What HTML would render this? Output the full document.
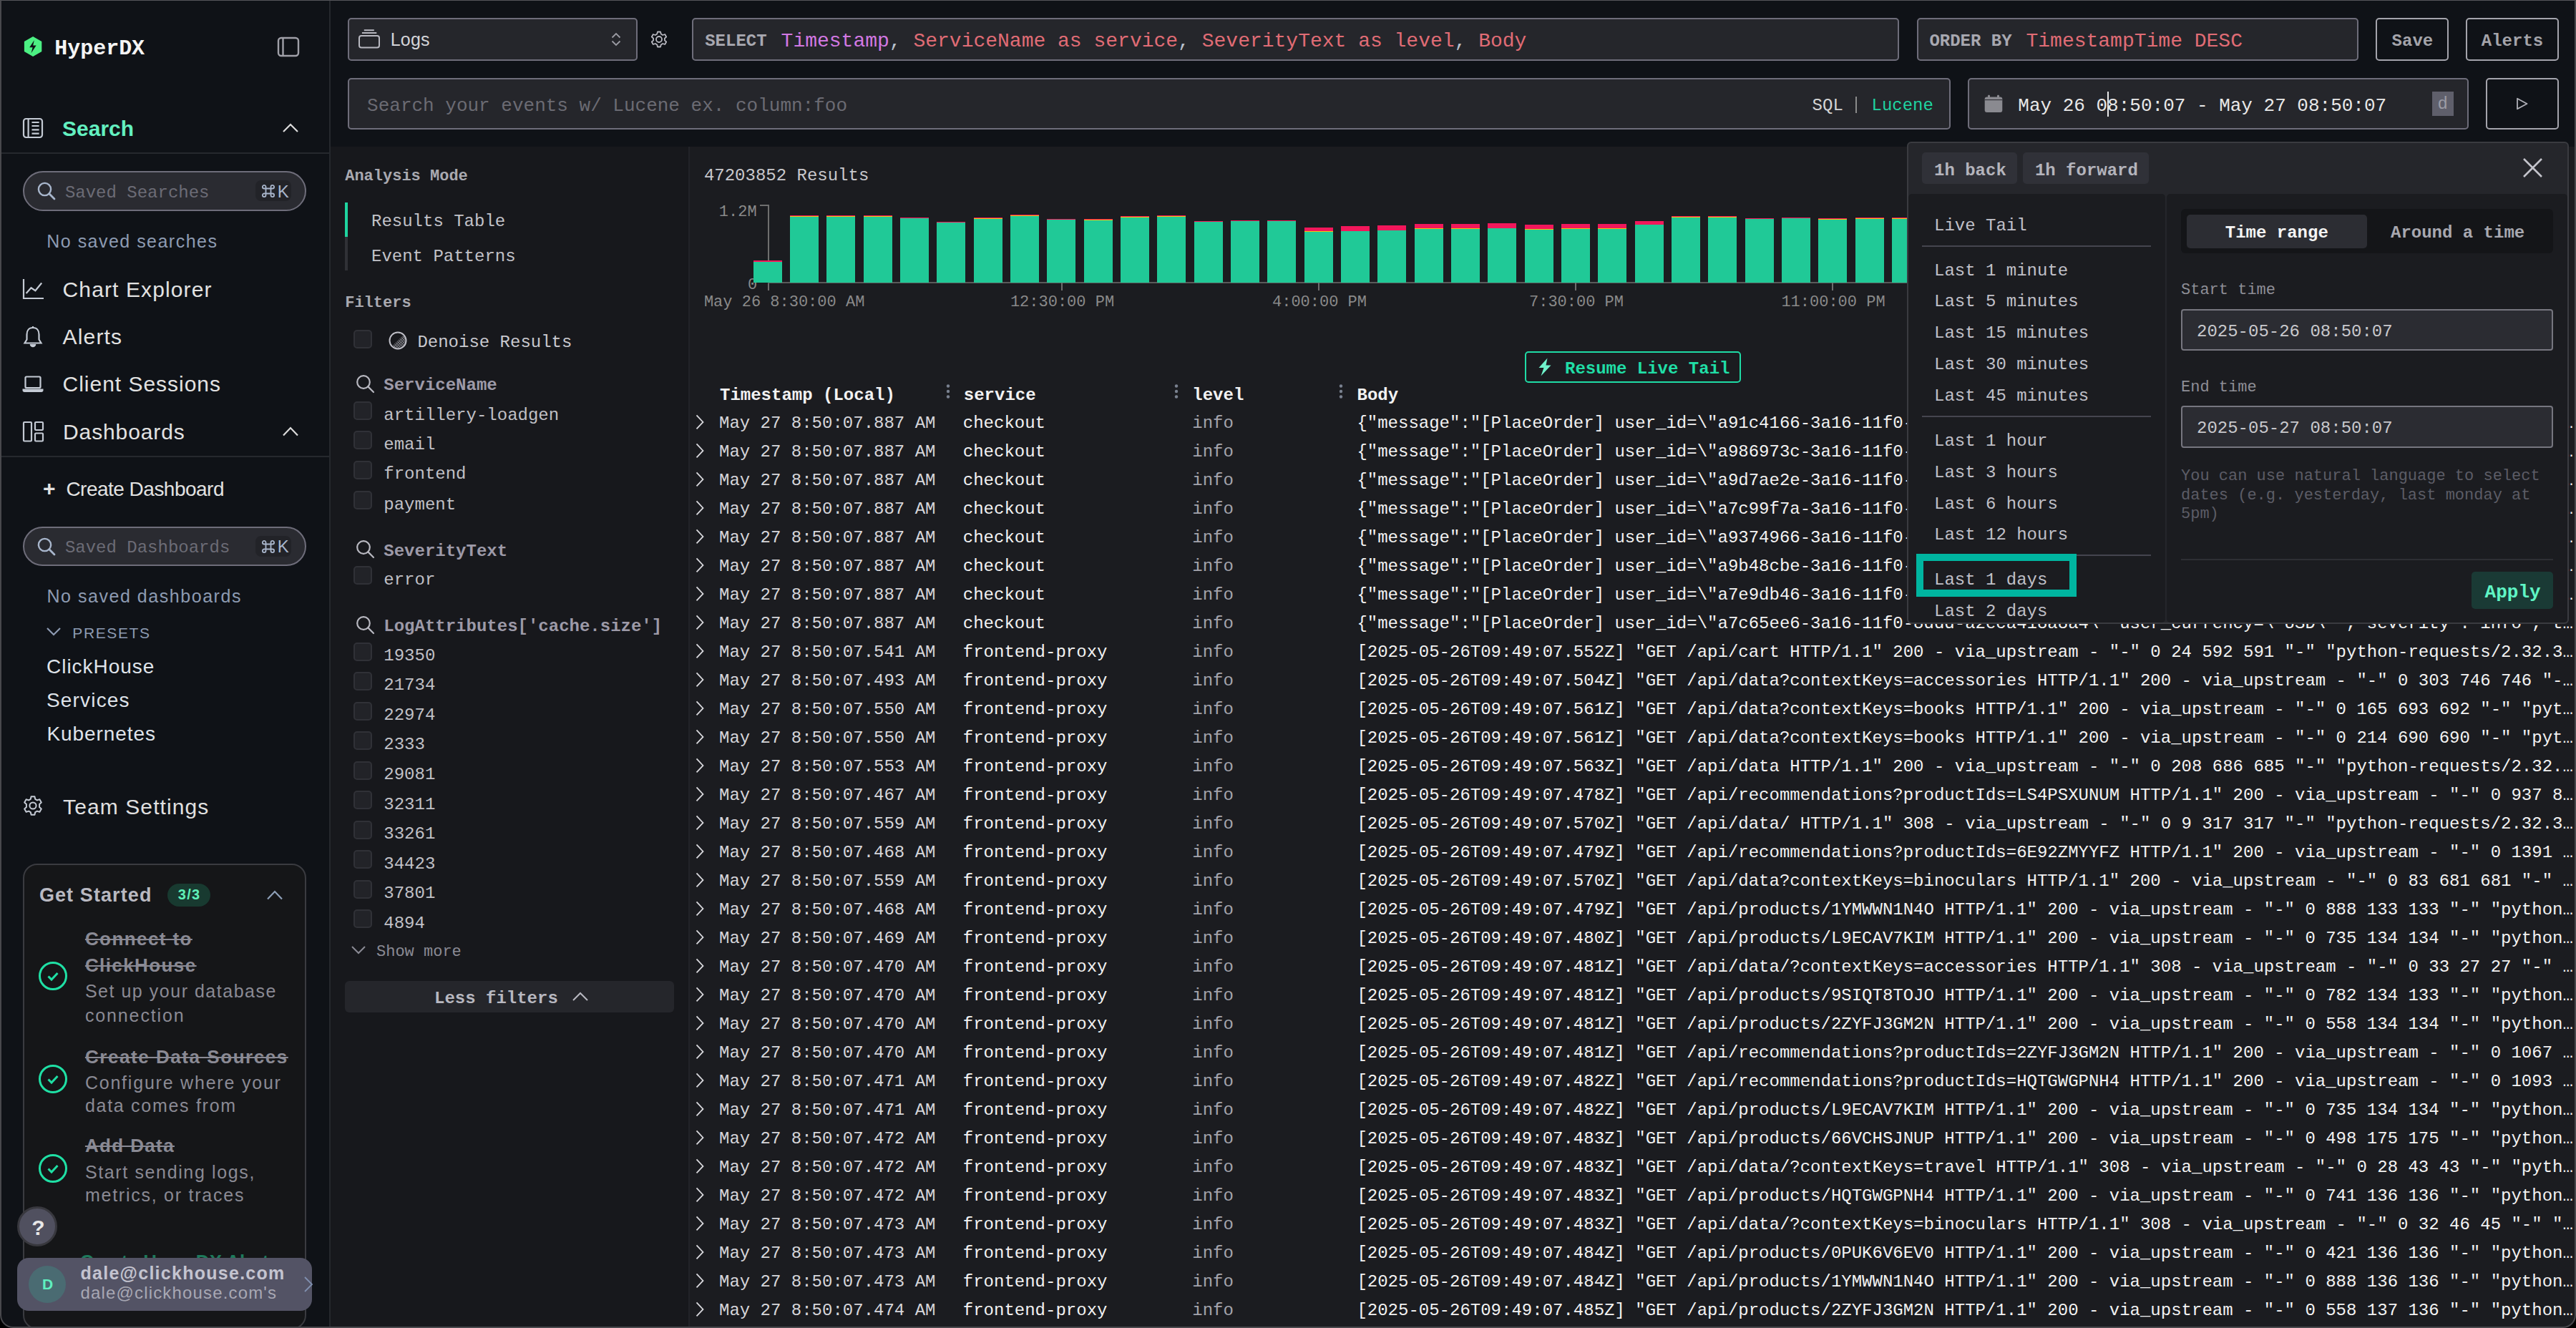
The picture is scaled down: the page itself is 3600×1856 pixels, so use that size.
<!DOCTYPE html><html><head><meta charset="utf-8"><style>*{margin:0;padding:0;box-sizing:border-box}
html,body{width:3600px;height:1856px;background:#000;overflow:hidden}
#w{position:absolute;left:0;top:0;width:3600px;height:1856px;overflow:hidden;border-radius:0 0 18px 18px;background:#17181c}
.t{position:absolute;white-space:pre}
.r{position:absolute}
.row{position:absolute;left:0;width:3600px;height:40px;font-family:"Liberation Mono",monospace;font-size:24px;line-height:27px;white-space:pre}
.row span{position:absolute;top:0}
.c1{left:1005px;color:#d6d6da}
.c2{left:1345.8px;color:#f2f2f2}
.c3{left:1666.3px;color:#a4a4ac}
.c4{left:1896.4px;color:#f2f2f2}
#frame{position:absolute;left:0;top:0;width:3600px;height:1856px;border:2px solid #48484c;border-top:1px solid #55555a;border-radius:0 0 18px 18px;pointer-events:none}
</style></head><body><div id="w"><div class="r" style="left:462px;top:0px;width:3138px;height:205px;background:#0f1217;"></div>
<div class="r" style="left:462px;top:205px;width:3138px;height:1651px;background:#17181c;"></div>
<div class="r" style="left:486px;top:25px;width:405px;height:60px;background:#25262b;border:2px solid #6e6d7a;border-radius:5px;"></div>
<svg class="r" style="left:500px;top:39px;" width="32" height="30" viewBox="0 0 32 30" fill="none"><rect x="2" y="11" width="28" height="16.5" rx="3" stroke="#b8b8c0" stroke-width="2"/><line x1="5.9" y1="7" x2="26.3" y2="7" stroke="#b8b8c0" stroke-width="2"/><line x1="8.8" y1="3.2" x2="22.8" y2="3.2" stroke="#b8b8c0" stroke-width="2"/></svg>
<div class="t" style="left:545.70px;top:41.10px;font-family:'Liberation Sans', sans-serif;font-size:25px;line-height:28px;color:#d4d4d8;letter-spacing:0.233px;">Logs</div>
<svg class="r" style="left:853px;top:45px;" width="16" height="20" viewBox="0 0 16 20" fill="none"><path d="M2.5 7.5 L8 2 L13.5 7.5 M2.5 12.5 L8 18 L13.5 12.5" stroke="#9a9aa2" stroke-width="1.8" fill="none"/></svg>
<svg class="r" style="left:907px;top:41px;" width="28" height="28" viewBox="0 0 28 28" fill="none"><path d="M12 3.5 L16 3.5 L16.8 6.6 L19.1 8 L22.2 7 L24.2 10.5 L21.9 12.6 L21.9 15.4 L24.2 17.5 L22.2 21 L19.1 20 L16.8 21.4 L16 24.5 L12 24.5 L11.2 21.4 L8.9 20 L5.8 21 L3.8 17.5 L6.1 15.4 L6.1 12.6 L3.8 10.5 L5.8 7 L8.9 8 L11.2 6.6 Z" stroke="#b8b8c0" stroke-width="1.8" stroke-linejoin="round"/><circle cx="14" cy="14" r="4" stroke="#b8b8c0" stroke-width="1.8"/></svg>
<div class="r" style="left:967px;top:25px;width:1687px;height:60px;background:#25262b;border:2px solid #6e6d7a;border-radius:5px;"></div>
<div class="t" style="left:985.20px;top:44.10px;font-family:'Liberation Mono', monospace;font-size:24px;line-height:27px;color:#a8a8b0;font-weight:700;">SELECT</div>
<div class="t" style="left:1091.60px;top:42px;font-family:'Liberation Mono', monospace;font-size:28px;line-height:31px;"><span style="color:#d278e2">Timestamp</span><span style="color:#b8c0cc">, </span><span style="color:#e06c75">ServiceName as service</span><span style="color:#b8c0cc">, </span><span style="color:#e06c75">SeverityText as level</span><span style="color:#b8c0cc">, </span><span style="color:#e06c75">Body</span></div>
<div class="r" style="left:2679px;top:25px;width:617px;height:60px;background:#25262b;border:2px solid #6e6d7a;border-radius:5px;"></div>
<div class="t" style="left:2696.40px;top:44.10px;font-family:'Liberation Mono', monospace;font-size:24px;line-height:27px;color:#a8a8b0;font-weight:700;">ORDER BY</div>
<div class="t" style="left:2831.50px;top:42px;font-family:'Liberation Mono', monospace;font-size:28px;line-height:31px;"><span style="color:#e06c75">TimestampTime DESC</span></div>
<div class="r" style="left:3320px;top:25px;width:102px;height:60px;background:#0f1217;border:2px solid #a4a4ac;border-radius:5px;"></div>
<div class="t" style="left:3342.60px;top:44.10px;font-family:'Liberation Mono', monospace;font-size:24px;line-height:27px;color:#a4a4aa;font-weight:700;">Save</div>
<div class="r" style="left:3446px;top:25px;width:130px;height:60px;background:#0f1217;border:2px solid #a4a4ac;border-radius:5px;"></div>
<div class="t" style="left:3467.80px;top:44.10px;font-family:'Liberation Mono', monospace;font-size:24px;line-height:27px;color:#a4a4aa;font-weight:700;">Alerts</div>
<div class="r" style="left:486px;top:109px;width:2240px;height:72px;background:#25262b;border:2px solid #6e6d7a;border-radius:5px;"></div>
<div class="t" style="left:513.10px;top:132.80px;font-family:'Liberation Mono', monospace;font-size:26px;line-height:30px;color:#6b6b73;">Search your events w/ Lucene ex. column:foo</div>
<div class="t" style="left:2532.60px;top:133.80px;font-family:'Liberation Mono', monospace;font-size:24px;line-height:27px;color:#d5d5d5;">SQL</div>
<div class="r" style="left:2593px;top:135px;width:2px;height:23px;background:#8a8a8a;"></div>
<div class="t" style="left:2615.50px;top:133.80px;font-family:'Liberation Mono', monospace;font-size:24px;line-height:27px;color:#1fd4a0;">Lucene</div>
<div class="r" style="left:2750px;top:109px;width:700px;height:72px;background:#25262b;border:2px solid #6e6d7a;border-radius:5px;"></div>
<svg class="r" style="left:2772px;top:131px;" width="28" height="28" viewBox="0 0 28 28" fill="none"><rect x="1.7" y="4.5" width="24.6" height="21.6" rx="3" fill="#8a8a90"/><rect x="6" y="1.8" width="3" height="5" rx="1" fill="#8a8a90"/><rect x="19" y="1.8" width="3" height="5" rx="1" fill="#8a8a90"/><line x1="1.7" y1="8.6" x2="26.3" y2="8.6" stroke="#25262b" stroke-width="1"/></svg>
<div class="t" style="left:2820.30px;top:132.80px;font-family:'Liberation Mono', monospace;font-size:26px;line-height:30px;color:#e8e8e8;">May 26 08:50:07 - May 27 08:50:07</div>
<div class="r" style="left:2945px;top:128px;width:2px;height:35px;background:#e8e8e8;"></div>
<div class="r" style="left:3399px;top:128px;width:30px;height:34px;background:#5f5f6b;"></div>
<div class="t" style="left:3406.50px;top:132.00px;font-family:'Liberation Mono', monospace;font-size:24px;line-height:27px;color:#9c9ca6;">d</div>
<div class="r" style="left:3474px;top:109px;width:102px;height:72px;background:#0f1217;border:2px solid #a4a4ac;border-radius:5px;"></div>
<svg class="r" style="left:3515px;top:135px;" width="20" height="20" viewBox="0 0 20 20" fill="none"><path d="M3 2.7 L16.5 10 L3 17.3 Z" stroke="#b0b0b8" stroke-width="1.8" fill="none" stroke-linejoin="round"/></svg>
<div class="r" style="left:0px;top:0px;width:461px;height:1856px;background:#0f1217;"></div>
<div class="r" style="left:460px;top:0px;width:2px;height:1856px;background:#25282d;"></div>
<svg class="r" style="left:33px;top:50px;" width="27" height="30" viewBox="0 0 27 30" fill="none"><path d="M13.1 0.9 L25.3 7.9 L25.3 21.9 L13.1 28.9 L0.9 21.9 L0.9 7.9 Z" fill="#4cf083"/><path d="M14.8 6.2 L8.2 16.2 L12.6 16.2 L10.6 24.2 L17.6 13.6 L13.2 13.6 Z" fill="#0f1217"/></svg>
<div class="t" style="left:76.30px;top:51.10px;font-family:'Liberation Mono', monospace;font-size:30px;line-height:34px;color:#f4f4f4;font-weight:700;letter-spacing:-0.033px;">HyperDX</div>
<svg class="r" style="left:386px;top:50px;" width="34" height="30" viewBox="0 0 34 30" fill="none"><rect x="3" y="3" width="28" height="25" rx="4" stroke="#a0a0a8" stroke-width="2.4"/><line x1="9.5" y1="3" x2="9.5" y2="28" stroke="#a0a0a8" stroke-width="2.4"/></svg>
<svg class="r" style="left:30px;top:163px;" width="32" height="32" viewBox="0 0 32 32" fill="none"><rect x="3" y="3" width="26" height="26" rx="3.5" stroke="#c4cad4" stroke-width="2.2"/><line x1="9.6" y1="3" x2="9.6" y2="29" stroke="#c4cad4" stroke-width="2.2"/><path d="M14.5 8 H24.6 M14.5 13 H24.6 M14.5 18.3 H24.6 M14.5 23.7 H24.6" stroke="#c4cad4" stroke-width="2.2"/></svg>
<div class="t" style="left:86.90px;top:163.00px;font-family:'Liberation Sans', sans-serif;font-size:30px;line-height:33px;color:#63f0c0;font-weight:700;letter-spacing:0.040px;">Search</div>
<svg class="r" style="left:394px;top:172px;" width="24" height="14" viewBox="0 0 24 14" fill="none"><path d="M2 12 L12.0 2 L22 12" stroke="#dcdcdc" stroke-width="2.2" fill="none"/></svg>
<div class="r" style="left:2px;top:213px;width:458px;height:2px;background:#25282d;"></div>
<div class="r" style="left:32px;top:239px;width:396px;height:56px;background:#2a2b31;border:2px solid #6e6d7a;border-radius:28px;"></div>
<svg class="r" style="left:51px;top:253px;" width="28" height="28" viewBox="0 0 28 28" fill="none"><circle cx="11.5" cy="11.5" r="8.6" stroke="#a8b6cc" stroke-width="2.4"/><line x1="17.8" y1="17.8" x2="25" y2="25" stroke="#a8b6cc" stroke-width="2.8" stroke-linecap="round"/></svg>
<div class="t" style="left:90.90px;top:255.90px;font-family:'Liberation Mono', monospace;font-size:24px;line-height:27px;color:#6c6c76;">Saved Searches</div>
<div class="r" style="left:357px;top:252px;width:50px;height:29px;background:#222328;border-radius:8px;"></div>
<svg class="r" style="left:365px;top:257px;" width="21" height="20" viewBox="0 0 21 20" fill="none"><path d="M6.5 6.5 H13.5 V13.5 H6.5 Z M6.5 6.5 V4.2 A2.3 2.3 0 1 0 4.2 6.5 H6.5 M13.5 6.5 H15.8 A2.3 2.3 0 1 0 13.5 4.2 V6.5 M13.5 13.5 V15.8 A2.3 2.3 0 1 0 15.8 13.5 H13.5 M6.5 13.5 H4.2 A2.3 2.3 0 1 0 6.5 15.8 V13.5" stroke="#a9b6cc" stroke-width="1.8"/></svg>
<div class="t" style="left:387.70px;top:253.90px;font-family:'Liberation Sans', sans-serif;font-size:24px;line-height:27px;color:#a9b6cc;">K</div>
<div class="t" style="left:65.30px;top:322.70px;font-family:'Liberation Sans', sans-serif;font-size:25px;line-height:28px;color:#8d9bb2;letter-spacing:1.475px;">No saved searches</div>
<div class="t" style="left:87.60px;top:388.40px;font-family:'Liberation Sans', sans-serif;font-size:30px;line-height:33px;color:#e2e2e2;letter-spacing:1.115px;">Chart Explorer</div>
<svg class="r" style="left:30px;top:388px;" width="32" height="32" viewBox="0 0 32 32" fill="none"><path d="M3 2 V29 H31" stroke="#c4cad4" stroke-width="2.2"/><path d="M6.6 22 L13.5 14.3 L19.4 18.2 L28.2 7.5" stroke="#c4cad4" stroke-width="2.2" fill="none"/></svg>
<div class="t" style="left:87.60px;top:454.20px;font-family:'Liberation Sans', sans-serif;font-size:30px;line-height:33px;color:#e2e2e2;letter-spacing:1.160px;">Alerts</div>
<svg class="r" style="left:30px;top:454px;" width="32" height="32" viewBox="0 0 32 32" fill="none"><path d="M16 4 C10 4 7.5 8.5 7.5 13.5 V20.5 L4.5 25.5 H27.5 L24.5 20.5 V13.5 C24.5 8.5 22 4 16 4 Z" stroke="#c4cad4" stroke-width="2.2" fill="none"/><path d="M13 27 A3 3 0 0 0 19 27" stroke="#c4cad4" stroke-width="2.6" fill="#c4cad4"/><line x1="16" y1="2" x2="16" y2="4" stroke="#c4cad4" stroke-width="2"/></svg>
<div class="t" style="left:87.60px;top:520.20px;font-family:'Liberation Sans', sans-serif;font-size:30px;line-height:33px;color:#e2e2e2;letter-spacing:0.971px;">Client Sessions</div>
<svg class="r" style="left:30px;top:522px;" width="32" height="28" viewBox="0 0 32 28" fill="none"><rect x="5.5" y="4.5" width="21" height="15.5" rx="1.5" stroke="#c4cad4" stroke-width="2.2"/><path d="M2.5 22.5 H29.5 V23.5 A1.5 1.5 0 0 1 28 25 H4 A1.5 1.5 0 0 1 2.5 23.5 Z" stroke="#c4cad4" stroke-width="2" fill="#c4cad4"/></svg>
<div class="t" style="left:88.00px;top:587.40px;font-family:'Liberation Sans', sans-serif;font-size:30px;line-height:33px;color:#e2e2e2;letter-spacing:0.889px;">Dashboards</div>
<svg class="r" style="left:30px;top:587px;" width="32" height="32" viewBox="0 0 32 32" fill="none"><rect x="3" y="3" width="11" height="26.5" rx="1.2" stroke="#c4cad4" stroke-width="2.2"/><rect x="19" y="3" width="11" height="11" rx="1.2" stroke="#c4cad4" stroke-width="2.2"/><rect x="19" y="18.5" width="11" height="11" rx="1.2" stroke="#c4cad4" stroke-width="2.2"/></svg>
<svg class="r" style="left:394px;top:596px;" width="24" height="14.5" viewBox="0 0 24 14.5" fill="none"><path d="M2 12.5 L12.0 2 L22 12.5" stroke="#dcdcdc" stroke-width="2.2" fill="none"/></svg>
<div class="r" style="left:2px;top:637px;width:458px;height:2px;background:#25282d;"></div>
<div class="t" style="left:60.10px;top:665.50px;font-family:'Liberation Sans', sans-serif;font-size:30px;line-height:33px;color:#e2e2e2;font-weight:700;">+</div>
<div class="t" style="left:92.40px;top:667.90px;font-family:'Liberation Sans', sans-serif;font-size:28px;line-height:31px;color:#e2e2e2;letter-spacing:-0.513px;">Create Dashboard</div>
<div class="r" style="left:32px;top:736px;width:396px;height:55px;background:#2a2b31;border:2px solid #6e6d7a;border-radius:28px;"></div>
<svg class="r" style="left:51px;top:750px;" width="28" height="28" viewBox="0 0 28 28" fill="none"><circle cx="11.5" cy="11.5" r="8.6" stroke="#a8b6cc" stroke-width="2.4"/><line x1="17.8" y1="17.8" x2="25" y2="25" stroke="#a8b6cc" stroke-width="2.8" stroke-linecap="round"/></svg>
<div class="t" style="left:90.90px;top:752.20px;font-family:'Liberation Mono', monospace;font-size:24px;line-height:27px;color:#6c6c76;">Saved Dashboards</div>
<div class="r" style="left:357px;top:749px;width:50px;height:29px;background:#222328;border-radius:8px;"></div>
<svg class="r" style="left:365px;top:754px;" width="21" height="20" viewBox="0 0 21 20" fill="none"><path d="M6.5 6.5 H13.5 V13.5 H6.5 Z M6.5 6.5 V4.2 A2.3 2.3 0 1 0 4.2 6.5 H6.5 M13.5 6.5 H15.8 A2.3 2.3 0 1 0 13.5 4.2 V6.5 M13.5 13.5 V15.8 A2.3 2.3 0 1 0 15.8 13.5 H13.5 M6.5 13.5 H4.2 A2.3 2.3 0 1 0 6.5 15.8 V13.5" stroke="#a9b6cc" stroke-width="1.8"/></svg>
<div class="t" style="left:387.70px;top:750.20px;font-family:'Liberation Sans', sans-serif;font-size:24px;line-height:27px;color:#a9b6cc;">K</div>
<div class="t" style="left:65.40px;top:818.70px;font-family:'Liberation Sans', sans-serif;font-size:25px;line-height:28px;color:#8d9bb2;letter-spacing:1.544px;">No saved dashboards</div>
<svg class="r" style="left:64px;top:876px;" width="22" height="15" viewBox="0 0 22 15" fill="none"><path d="M2 2 L11 11 L20 2" stroke="#8d9bb2" stroke-width="2.2" fill="none"/></svg>
<div class="t" style="left:101.30px;top:873.00px;font-family:'Liberation Sans', sans-serif;font-size:21px;line-height:23px;color:#8d9bb2;letter-spacing:1.617px;">PRESETS</div>
<div class="t" style="left:65.00px;top:916.10px;font-family:'Liberation Sans', sans-serif;font-size:28px;line-height:31px;color:#dfe3ea;letter-spacing:0.978px;">ClickHouse</div>
<div class="t" style="left:65.00px;top:963.10px;font-family:'Liberation Sans', sans-serif;font-size:28px;line-height:31px;color:#dfe3ea;letter-spacing:1.171px;">Services</div>
<div class="t" style="left:65.40px;top:1010.10px;font-family:'Liberation Sans', sans-serif;font-size:28px;line-height:31px;color:#dfe3ea;letter-spacing:0.933px;">Kubernetes</div>
<svg class="r" style="left:30px;top:1110px;" width="32" height="32" viewBox="0 0 32 32" fill="none"><path d="M13.6 3.2 L18.4 3.2 L19.2 6.8 L21.9 8.4 L25.4 7.2 L27.8 11.4 L25.1 13.9 L25.1 18.1 L27.8 20.6 L25.4 24.8 L21.9 23.6 L19.2 25.2 L18.4 28.8 L13.6 28.8 L12.8 25.2 L10.1 23.6 L6.6 24.8 L4.2 20.6 L6.9 18.1 L6.9 13.9 L4.2 11.4 L6.6 7.2 L10.1 8.4 L12.8 6.8 Z" stroke="#c4cad4" stroke-width="2" stroke-linejoin="round" fill="none"/><circle cx="16" cy="16" r="4.6" stroke="#c4cad4" stroke-width="2"/></svg>
<div class="t" style="left:88.10px;top:1110.50px;font-family:'Liberation Sans', sans-serif;font-size:30px;line-height:33px;color:#e0e0e0;letter-spacing:1.092px;">Team Settings</div>
<div class="r" style="left:32px;top:1207px;width:396px;height:651px;background:#151618;border:2px solid #3a3b40;border-radius:20px;"></div>
<div class="t" style="left:54.90px;top:1235.70px;font-family:'Liberation Sans', sans-serif;font-size:27px;line-height:30px;color:#b9b9c1;font-weight:700;letter-spacing:1.100px;">Get Started</div>
<div class="r" style="left:234px;top:1235px;width:60px;height:32px;background:#183a30;border-radius:16px;"></div>
<div class="t" style="left:248.70px;top:1238.80px;font-family:'Liberation Sans', sans-serif;font-size:20px;line-height:22px;color:#5ff0b8;font-weight:700;letter-spacing:1.350px;">3/3</div>
<svg class="r" style="left:372px;top:1244px;" width="24" height="14.400000000000091" viewBox="0 0 24 14.400000000000091" fill="none"><path d="M2 12.400000000000091 L12.0 2 L22 12.400000000000091" stroke="#8ea0b8" stroke-width="2.2" fill="none"/></svg>
<svg class="r" style="left:52px;top:1342.3px;" width="44" height="44.0" viewBox="0 0 44 44.0" fill="none"><circle cx="22" cy="22" r="18.5" stroke="#1fe0a5" stroke-width="3"/><path d="M15.5 22.5 L20 27 L28.5 18" stroke="#1fe0a5" stroke-width="3" fill="none"/></svg>
<div class="t" style="left:118.90px;top:1297.00px;font-family:'Liberation Sans', sans-serif;font-size:26px;line-height:30px;color:#8a8a94;font-weight:700;letter-spacing:1.422px;text-decoration:line-through;">Connect to</div>
<div class="t" style="left:118.90px;top:1334.20px;font-family:'Liberation Sans', sans-serif;font-size:26px;line-height:30px;color:#8a8a94;font-weight:700;letter-spacing:1.411px;text-decoration:line-through;">ClickHouse</div>
<div class="t" style="left:118.90px;top:1370.90px;font-family:'Liberation Sans', sans-serif;font-size:25px;line-height:28px;color:#8a8a94;letter-spacing:1.521px;">Set up your database</div>
<div class="t" style="left:118.90px;top:1404.50px;font-family:'Liberation Sans', sans-serif;font-size:25px;line-height:28px;color:#8a8a94;letter-spacing:1.878px;">connection</div>
<svg class="r" style="left:52px;top:1486px;" width="44" height="44" viewBox="0 0 44 44" fill="none"><circle cx="22" cy="22" r="18.5" stroke="#1fe0a5" stroke-width="3"/><path d="M15.5 22.5 L20 27 L28.5 18" stroke="#1fe0a5" stroke-width="3" fill="none"/></svg>
<div class="t" style="left:118.90px;top:1461.60px;font-family:'Liberation Sans', sans-serif;font-size:26px;line-height:30px;color:#8a8a94;font-weight:700;letter-spacing:1.556px;text-decoration:line-through;">Create Data Sources</div>
<div class="t" style="left:118.90px;top:1498.50px;font-family:'Liberation Sans', sans-serif;font-size:25px;line-height:28px;color:#8a8a94;letter-spacing:1.789px;">Configure where your</div>
<div class="t" style="left:118.90px;top:1531.00px;font-family:'Liberation Sans', sans-serif;font-size:25px;line-height:28px;color:#8a8a94;letter-spacing:1.714px;">data comes from</div>
<svg class="r" style="left:52px;top:1611px;" width="44" height="44" viewBox="0 0 44 44" fill="none"><circle cx="22" cy="22" r="18.5" stroke="#1fe0a5" stroke-width="3"/><path d="M15.5 22.5 L20 27 L28.5 18" stroke="#1fe0a5" stroke-width="3" fill="none"/></svg>
<div class="t" style="left:118.90px;top:1585.50px;font-family:'Liberation Sans', sans-serif;font-size:26px;line-height:30px;color:#8a8a94;font-weight:700;letter-spacing:1.371px;text-decoration:line-through;">Add Data</div>
<div class="t" style="left:118.90px;top:1623.50px;font-family:'Liberation Sans', sans-serif;font-size:25px;line-height:28px;color:#8a8a94;letter-spacing:1.633px;">Start sending logs,</div>
<div class="t" style="left:118.90px;top:1656.00px;font-family:'Liberation Sans', sans-serif;font-size:25px;line-height:28px;color:#8a8a94;letter-spacing:1.753px;">metrics, or traces</div>
<div class="t" style="left:112.00px;top:1748.00px;font-family:'Liberation Sans', sans-serif;font-size:26px;line-height:30px;color:#1e7a5c;font-weight:700;">Create HyperDX Alerts</div>
<div class="r" style="left:24px;top:1686px;width:56px;height:56px;background:#50505f;border:3px solid #38383e;border-radius:28px;"></div>
<div class="t" style="left:44.30px;top:1699.00px;font-family:'Liberation Sans', sans-serif;font-size:30px;line-height:33px;color:#e8e8e8;font-weight:700;">?</div>
<div class="r" style="left:24px;top:1758px;width:412px;height:74px;background:#535365;border-radius:16px;"></div>
<div class="r" style="left:40px;top:1769px;width:52px;height:52px;background:#4a6b72;border-radius:26px;"></div>
<div class="t" style="left:59.00px;top:1782.60px;font-family:'Liberation Sans', sans-serif;font-size:21px;line-height:23px;color:#5ff0c0;font-weight:700;">D</div>
<div class="t" style="left:112.50px;top:1765.00px;font-family:'Liberation Sans', sans-serif;font-size:25px;line-height:28px;color:#c4c4d0;font-weight:700;letter-spacing:1.267px;">dale@clickhouse.com</div>
<div class="t" style="left:112.50px;top:1792.60px;font-family:'Liberation Sans', sans-serif;font-size:24px;line-height:27px;color:#a8a8b4;letter-spacing:1.160px;">dale@clickhouse.com&#x27;s</div>
<svg class="r" style="left:424px;top:1783px;" width="16" height="24" viewBox="0 0 16 24" fill="none"><path d="M2 2 L12 12 L2 22" stroke="#8090b0" stroke-width="1.8" fill="none"/></svg>
<div class="r" style="left:963px;top:205px;width:2637px;height:1651px;background:#1b1c20;"></div>
<div class="r" style="left:962px;top:205px;width:2px;height:1651px;background:#222328;"></div>
<div class="t" style="left:482.20px;top:233.60px;font-family:'Liberation Mono', monospace;font-size:22px;line-height:25px;color:#a9a9b0;font-weight:700;">Analysis Mode</div>
<div class="r" style="left:482px;top:283px;width:4px;height:48px;background:#1fd4a0;"></div>
<div class="r" style="left:482px;top:331px;width:4px;height:47px;background:#303136;"></div>
<div class="t" style="left:519.00px;top:296.20px;font-family:'Liberation Mono', monospace;font-size:24px;line-height:27px;color:#c2c2c8;">Results Table</div>
<div class="t" style="left:519.00px;top:345.10px;font-family:'Liberation Mono', monospace;font-size:24px;line-height:27px;color:#c2c2c8;">Event Patterns</div>
<div class="t" style="left:482.20px;top:411.10px;font-family:'Liberation Mono', monospace;font-size:22px;line-height:25px;color:#a9a9b0;font-weight:700;">Filters</div>
<div class="r" style="left:494px;top:461px;width:26px;height:26px;background:#222328;border:2px solid #303137;border-radius:5px;"></div>
<svg class="r" style="left:542px;top:462px;" width="28" height="28" viewBox="0 0 28 28" fill="none"><defs><pattern id="hp" width="2.6" height="2.6" patternUnits="userSpaceOnUse" patternTransform="rotate(45)"><circle cx="1.3" cy="1.3" r="0.95" fill="#b8b8c0"/></pattern></defs><circle cx="14" cy="14" r="11.5" stroke="#c0c0c8" stroke-width="2"/><path d="M22.1 5.9 A11.5 11.5 0 0 1 5.9 22.1 Z" fill="url(#hp)"/></svg>
<div class="t" style="left:583.40px;top:465.00px;font-family:'Liberation Mono', monospace;font-size:24px;line-height:27px;color:#c9c9cf;">Denoise Results</div>
<svg class="r" style="left:496px;top:522.4px;" width="30" height="30.0" viewBox="0 0 30 30.0" fill="none"><circle cx="12" cy="12" r="8.8" stroke="#b8b8c0" stroke-width="2.2"/><line x1="18.4" y1="18.4" x2="26" y2="26" stroke="#b8b8c0" stroke-width="2.2" stroke-linecap="round"/></svg>
<div class="t" style="left:536.30px;top:525.40px;font-family:'Liberation Mono', monospace;font-size:24px;line-height:27px;color:#9d9aa8;font-weight:700;">ServiceName</div>
<div class="r" style="left:494px;top:561.3px;width:26px;height:26.0px;background:#222328;border:2px solid #303137;border-radius:5px;"></div>
<div class="t" style="left:536.30px;top:566.60px;font-family:'Liberation Mono', monospace;font-size:24px;line-height:27px;color:#c0c0c6;">artillery-loadgen</div>
<div class="r" style="left:494px;top:602.4px;width:26px;height:26.0px;background:#222328;border:2px solid #303137;border-radius:5px;"></div>
<div class="t" style="left:536.30px;top:607.70px;font-family:'Liberation Mono', monospace;font-size:24px;line-height:27px;color:#c0c0c6;">email</div>
<div class="r" style="left:494px;top:644px;width:26px;height:26px;background:#222328;border:2px solid #303137;border-radius:5px;"></div>
<div class="t" style="left:536.30px;top:649.30px;font-family:'Liberation Mono', monospace;font-size:24px;line-height:27px;color:#c0c0c6;">frontend</div>
<div class="r" style="left:494px;top:686.3px;width:26px;height:26.0px;background:#222328;border:2px solid #303137;border-radius:5px;"></div>
<div class="t" style="left:536.30px;top:691.60px;font-family:'Liberation Mono', monospace;font-size:24px;line-height:27px;color:#c0c0c6;">payment</div>
<svg class="r" style="left:496px;top:752.8px;" width="30" height="30.0" viewBox="0 0 30 30.0" fill="none"><circle cx="12" cy="12" r="8.8" stroke="#b8b8c0" stroke-width="2.2"/><line x1="18.4" y1="18.4" x2="26" y2="26" stroke="#b8b8c0" stroke-width="2.2" stroke-linecap="round"/></svg>
<div class="t" style="left:536.30px;top:756.50px;font-family:'Liberation Mono', monospace;font-size:24px;line-height:27px;color:#9d9aa8;font-weight:700;">SeverityText</div>
<div class="r" style="left:494px;top:791.3px;width:26px;height:26.0px;background:#222328;border:2px solid #303137;border-radius:5px;"></div>
<div class="t" style="left:536.30px;top:796.60px;font-family:'Liberation Mono', monospace;font-size:24px;line-height:27px;color:#c0c0c6;">error</div>
<svg class="r" style="left:496px;top:858.9px;" width="30" height="30.0" viewBox="0 0 30 30.0" fill="none"><circle cx="12" cy="12" r="8.8" stroke="#b8b8c0" stroke-width="2.2"/><line x1="18.4" y1="18.4" x2="26" y2="26" stroke="#b8b8c0" stroke-width="2.2" stroke-linecap="round"/></svg>
<div class="t" style="left:536.30px;top:862.40px;font-family:'Liberation Mono', monospace;font-size:24px;line-height:27px;color:#9d9aa8;font-weight:700;">LogAttributes[&#x27;cache.size&#x27;]</div>
<div class="r" style="left:494px;top:897.6px;width:26px;height:26.0px;background:#222328;border:2px solid #303137;border-radius:5px;"></div>
<div class="t" style="left:536.30px;top:902.90px;font-family:'Liberation Mono', monospace;font-size:24px;line-height:27px;color:#c0c0c6;">19350</div>
<div class="r" style="left:494px;top:939.12px;width:26px;height:26.0px;background:#222328;border:2px solid #303137;border-radius:5px;"></div>
<div class="t" style="left:536.30px;top:944.42px;font-family:'Liberation Mono', monospace;font-size:24px;line-height:27px;color:#c0c0c6;">21734</div>
<div class="r" style="left:494px;top:980.64px;width:26px;height:26.0px;background:#222328;border:2px solid #303137;border-radius:5px;"></div>
<div class="t" style="left:536.30px;top:985.94px;font-family:'Liberation Mono', monospace;font-size:24px;line-height:27px;color:#c0c0c6;">22974</div>
<div class="r" style="left:494px;top:1022.1600000000001px;width:26px;height:26.0px;background:#222328;border:2px solid #303137;border-radius:5px;"></div>
<div class="t" style="left:536.30px;top:1027.46px;font-family:'Liberation Mono', monospace;font-size:24px;line-height:27px;color:#c0c0c6;">2333</div>
<div class="r" style="left:494px;top:1063.68px;width:26px;height:26.0px;background:#222328;border:2px solid #303137;border-radius:5px;"></div>
<div class="t" style="left:536.30px;top:1068.98px;font-family:'Liberation Mono', monospace;font-size:24px;line-height:27px;color:#c0c0c6;">29081</div>
<div class="r" style="left:494px;top:1105.2px;width:26px;height:26.0px;background:#222328;border:2px solid #303137;border-radius:5px;"></div>
<div class="t" style="left:536.30px;top:1110.50px;font-family:'Liberation Mono', monospace;font-size:24px;line-height:27px;color:#c0c0c6;">32311</div>
<div class="r" style="left:494px;top:1146.72px;width:26px;height:26.0px;background:#222328;border:2px solid #303137;border-radius:5px;"></div>
<div class="t" style="left:536.30px;top:1152.02px;font-family:'Liberation Mono', monospace;font-size:24px;line-height:27px;color:#c0c0c6;">33261</div>
<div class="r" style="left:494px;top:1188.24px;width:26px;height:26.0px;background:#222328;border:2px solid #303137;border-radius:5px;"></div>
<div class="t" style="left:536.30px;top:1193.54px;font-family:'Liberation Mono', monospace;font-size:24px;line-height:27px;color:#c0c0c6;">34423</div>
<div class="r" style="left:494px;top:1229.76px;width:26px;height:26.0px;background:#222328;border:2px solid #303137;border-radius:5px;"></div>
<div class="t" style="left:536.30px;top:1235.06px;font-family:'Liberation Mono', monospace;font-size:24px;line-height:27px;color:#c0c0c6;">37801</div>
<div class="r" style="left:494px;top:1271.28px;width:26px;height:26.0px;background:#222328;border:2px solid #303137;border-radius:5px;"></div>
<div class="t" style="left:536.30px;top:1276.58px;font-family:'Liberation Mono', monospace;font-size:24px;line-height:27px;color:#c0c0c6;">4894</div>
<svg class="r" style="left:490px;top:1321px;" width="22" height="14" viewBox="0 0 22 14" fill="none"><path d="M2 2 L11 11 L20 2" stroke="#8a8a94" stroke-width="2" fill="none"/></svg>
<div class="t" style="left:526.00px;top:1318.00px;font-family:'Liberation Mono', monospace;font-size:22px;line-height:25px;color:#8a8a94;">Show more</div>
<div class="r" style="left:482px;top:1371px;width:460px;height:44px;background:#25262b;border-radius:6px;"></div>
<div class="t" style="left:607.00px;top:1382.00px;font-family:'Liberation Mono', monospace;font-size:24px;line-height:27px;color:#b8b8c0;font-weight:700;">Less filters</div>
<svg class="r" style="left:799px;top:1386px;" width="24" height="14" viewBox="0 0 24 14" fill="none"><path d="M2 12 L12 2 L22 12" stroke="#b8b8c0" stroke-width="2" fill="none"/></svg>
<div class="t" style="left:983.90px;top:231.60px;font-family:'Liberation Mono', monospace;font-size:24px;line-height:27px;color:#c8c8cc;">47203852 Results</div>
<div class="t" style="left:1004.80px;top:283.50px;font-family:'Liberation Mono', monospace;font-size:22px;line-height:25px;color:#8a8a8a;">1.2M</div>
<div class="t" style="left:1045.00px;top:385.60px;font-family:'Liberation Mono', monospace;font-size:22px;line-height:25px;color:#8a8a8a;">0</div>
<div class="r" style="left:1062px;top:286px;width:12px;height:2px;background:#6e6e6e;"></div>
<div class="r" style="left:1072.5px;top:286px;width:2.0px;height:120px;background:#6e6e6e;"></div>
<div class="r" style="left:1073px;top:394px;width:1592px;height:2px;background:#5a5a5a;"></div>
<div class="r" style="left:1482.5px;top:395px;width:2.0px;height:11px;background:#6e6e6e;"></div>
<div class="r" style="left:1842px;top:395px;width:2px;height:11px;background:#6e6e6e;"></div>
<div class="r" style="left:2201px;top:395px;width:2px;height:11px;background:#6e6e6e;"></div>
<div class="r" style="left:2560px;top:395px;width:2px;height:11px;background:#6e6e6e;"></div>
<div class="r" style="left:1053px;top:365.5px;width:40px;height:29.5px;background:#20c997;"></div>
<div class="r" style="left:1053px;top:364px;width:40px;height:1.5px;background:#f2175b;"></div>
<div class="r" style="left:1104px;top:303px;width:40px;height:92px;background:#20c997;"></div>
<div class="r" style="left:1104px;top:302px;width:40px;height:1px;background:#f5c211;"></div>
<div class="r" style="left:1104px;top:301px;width:40px;height:1px;background:#f2175b;"></div>
<div class="r" style="left:1155px;top:303px;width:40px;height:92px;background:#20c997;"></div>
<div class="r" style="left:1155px;top:302px;width:40px;height:1px;background:#f5c211;"></div>
<div class="r" style="left:1155px;top:301px;width:40px;height:1px;background:#f2175b;"></div>
<div class="r" style="left:1207px;top:303px;width:40px;height:92px;background:#20c997;"></div>
<div class="r" style="left:1207px;top:302px;width:40px;height:1px;background:#f5c211;"></div>
<div class="r" style="left:1207px;top:301px;width:40px;height:1px;background:#f2175b;"></div>
<div class="r" style="left:1258px;top:305px;width:40px;height:90px;background:#20c997;"></div>
<div class="r" style="left:1258px;top:304px;width:40px;height:1px;background:#f2175b;"></div>
<div class="r" style="left:1309px;top:311px;width:40px;height:84px;background:#20c997;"></div>
<div class="r" style="left:1309px;top:310px;width:40px;height:1px;background:#f2175b;"></div>
<div class="r" style="left:1361px;top:306px;width:40px;height:89px;background:#20c997;"></div>
<div class="r" style="left:1361px;top:305px;width:40px;height:1px;background:#f5c211;"></div>
<div class="r" style="left:1361px;top:304px;width:40px;height:1px;background:#f2175b;"></div>
<div class="r" style="left:1412px;top:302px;width:40px;height:93px;background:#20c997;"></div>
<div class="r" style="left:1412px;top:301px;width:40px;height:1px;background:#f5c211;"></div>
<div class="r" style="left:1412px;top:300px;width:40px;height:1px;background:#f2175b;"></div>
<div class="r" style="left:1463px;top:307px;width:40px;height:88px;background:#20c997;"></div>
<div class="r" style="left:1463px;top:306px;width:40px;height:1px;background:#f2175b;"></div>
<div class="r" style="left:1515px;top:308px;width:40px;height:87px;background:#20c997;"></div>
<div class="r" style="left:1515px;top:307px;width:40px;height:1px;background:#f5c211;"></div>
<div class="r" style="left:1515px;top:306px;width:40px;height:1px;background:#f2175b;"></div>
<div class="r" style="left:1566px;top:304px;width:40px;height:91px;background:#20c997;"></div>
<div class="r" style="left:1566px;top:303px;width:40px;height:1px;background:#f5c211;"></div>
<div class="r" style="left:1566px;top:302px;width:40px;height:1px;background:#f2175b;"></div>
<div class="r" style="left:1617px;top:303px;width:40px;height:92px;background:#20c997;"></div>
<div class="r" style="left:1617px;top:302px;width:40px;height:1px;background:#f5c211;"></div>
<div class="r" style="left:1617px;top:301px;width:40px;height:1px;background:#f2175b;"></div>
<div class="r" style="left:1669px;top:310px;width:40px;height:85px;background:#20c997;"></div>
<div class="r" style="left:1669px;top:309px;width:40px;height:1px;background:#f2175b;"></div>
<div class="r" style="left:1720px;top:309px;width:40px;height:86px;background:#20c997;"></div>
<div class="r" style="left:1720px;top:308px;width:40px;height:1px;background:#f2175b;"></div>
<div class="r" style="left:1771px;top:309px;width:40px;height:86px;background:#20c997;"></div>
<div class="r" style="left:1771px;top:308px;width:40px;height:1px;background:#f2175b;"></div>
<div class="r" style="left:1823px;top:324px;width:40px;height:71px;background:#20c997;"></div>
<div class="r" style="left:1823px;top:322.6px;width:40px;height:1.3999999999999773px;background:#f5c211;"></div>
<div class="r" style="left:1823px;top:318px;width:40px;height:4.600000000000023px;background:#f2175b;"></div>
<div class="r" style="left:1874px;top:323px;width:40px;height:72px;background:#20c997;"></div>
<div class="r" style="left:1874px;top:316px;width:40px;height:7px;background:#f2175b;"></div>
<div class="r" style="left:1925px;top:322px;width:40px;height:73px;background:#20c997;"></div>
<div class="r" style="left:1925px;top:315px;width:40px;height:7px;background:#f2175b;"></div>
<div class="r" style="left:1977px;top:320px;width:40px;height:75px;background:#20c997;"></div>
<div class="r" style="left:1977px;top:319px;width:40px;height:1px;background:#f5c211;"></div>
<div class="r" style="left:1977px;top:313px;width:40px;height:6px;background:#f2175b;"></div>
<div class="r" style="left:2028px;top:320px;width:40px;height:75px;background:#20c997;"></div>
<div class="r" style="left:2028px;top:319px;width:40px;height:1px;background:#f5c211;"></div>
<div class="r" style="left:2028px;top:313px;width:40px;height:6px;background:#f2175b;"></div>
<div class="r" style="left:2079px;top:319px;width:40px;height:76px;background:#20c997;"></div>
<div class="r" style="left:2079px;top:312px;width:40px;height:7px;background:#f2175b;"></div>
<div class="r" style="left:2131px;top:321px;width:40px;height:74px;background:#20c997;"></div>
<div class="r" style="left:2131px;top:320px;width:40px;height:1px;background:#f5c211;"></div>
<div class="r" style="left:2131px;top:314px;width:40px;height:6px;background:#f2175b;"></div>
<div class="r" style="left:2182px;top:320px;width:40px;height:75px;background:#20c997;"></div>
<div class="r" style="left:2182px;top:319px;width:40px;height:1px;background:#f5c211;"></div>
<div class="r" style="left:2182px;top:313px;width:40px;height:6px;background:#f2175b;"></div>
<div class="r" style="left:2233px;top:320px;width:40px;height:75px;background:#20c997;"></div>
<div class="r" style="left:2233px;top:319px;width:40px;height:1px;background:#f5c211;"></div>
<div class="r" style="left:2233px;top:313px;width:40px;height:6px;background:#f2175b;"></div>
<div class="r" style="left:2285px;top:314px;width:40px;height:81px;background:#20c997;"></div>
<div class="r" style="left:2285px;top:309px;width:40px;height:5px;background:#f2175b;"></div>
<div class="r" style="left:2336px;top:304px;width:40px;height:91px;background:#20c997;"></div>
<div class="r" style="left:2336px;top:303px;width:40px;height:1px;background:#f5c211;"></div>
<div class="r" style="left:2336px;top:302px;width:40px;height:1px;background:#f2175b;"></div>
<div class="r" style="left:2387px;top:304px;width:40px;height:91px;background:#20c997;"></div>
<div class="r" style="left:2387px;top:303px;width:40px;height:1px;background:#f5c211;"></div>
<div class="r" style="left:2387px;top:302px;width:40px;height:1px;background:#f2175b;"></div>
<div class="r" style="left:2439px;top:306px;width:40px;height:89px;background:#20c997;"></div>
<div class="r" style="left:2439px;top:305px;width:40px;height:1px;background:#f2175b;"></div>
<div class="r" style="left:2490px;top:305px;width:40px;height:90px;background:#20c997;"></div>
<div class="r" style="left:2490px;top:304px;width:40px;height:1px;background:#f2175b;"></div>
<div class="r" style="left:2541px;top:307px;width:40px;height:88px;background:#20c997;"></div>
<div class="r" style="left:2541px;top:306px;width:40px;height:1px;background:#f5c211;"></div>
<div class="r" style="left:2541px;top:305px;width:40px;height:1px;background:#f2175b;"></div>
<div class="r" style="left:2593px;top:306px;width:40px;height:89px;background:#20c997;"></div>
<div class="r" style="left:2593px;top:305px;width:40px;height:1px;background:#f5c211;"></div>
<div class="r" style="left:2593px;top:304px;width:40px;height:1px;background:#f2175b;"></div>
<div class="r" style="left:2644px;top:306px;width:21px;height:89px;background:#20c997;"></div>
<div class="r" style="left:2644px;top:305px;width:21px;height:1px;background:#f5c211;"></div>
<div class="r" style="left:2644px;top:304px;width:21px;height:1px;background:#f2175b;"></div>
<div class="t" style="left:983.90px;top:410.00px;font-family:'Liberation Mono', monospace;font-size:22px;line-height:25px;color:#8a8a8a;">May 26 8:30:00 AM</div>
<div class="t" style="left:1411.90px;top:410.00px;font-family:'Liberation Mono', monospace;font-size:22px;line-height:25px;color:#8a8a8a;">12:30:00 PM</div>
<div class="t" style="left:1778.00px;top:410.00px;font-family:'Liberation Mono', monospace;font-size:22px;line-height:25px;color:#8a8a8a;">4:00:00 PM</div>
<div class="t" style="left:2137.00px;top:410.00px;font-family:'Liberation Mono', monospace;font-size:22px;line-height:25px;color:#8a8a8a;">7:30:00 PM</div>
<div class="t" style="left:2489.40px;top:410.00px;font-family:'Liberation Mono', monospace;font-size:22px;line-height:25px;color:#8a8a8a;">11:00:00 PM</div>
<div class="t" style="left:1006.00px;top:538.60px;font-family:'Liberation Mono', monospace;font-size:24px;line-height:27px;color:#f2f2f2;font-weight:700;">Timestamp (Local)</div>
<div class="t" style="left:1346.80px;top:538.60px;font-family:'Liberation Mono', monospace;font-size:24px;line-height:27px;color:#f2f2f2;font-weight:700;">service</div>
<div class="t" style="left:1666.30px;top:538.60px;font-family:'Liberation Mono', monospace;font-size:24px;line-height:27px;color:#f2f2f2;font-weight:700;">level</div>
<div class="t" style="left:1896.50px;top:538.60px;font-family:'Liberation Mono', monospace;font-size:24px;line-height:27px;color:#f2f2f2;font-weight:700;">Body</div>
<svg class="r" style="left:1321px;top:536px;" width="8" height="22" viewBox="0 0 8 22" fill="none"><circle cx="4" cy="3.5" r="2.2" fill="#7a8290"/><circle cx="4" cy="11" r="2.2" fill="#7a8290"/><circle cx="4" cy="18.5" r="2.2" fill="#7a8290"/></svg>
<svg class="r" style="left:1640px;top:536px;" width="8" height="22" viewBox="0 0 8 22" fill="none"><circle cx="4" cy="3.5" r="2.2" fill="#7a8290"/><circle cx="4" cy="11" r="2.2" fill="#7a8290"/><circle cx="4" cy="18.5" r="2.2" fill="#7a8290"/></svg>
<svg class="r" style="left:1870px;top:536px;" width="8" height="22" viewBox="0 0 8 22" fill="none"><circle cx="4" cy="3.5" r="2.2" fill="#7a8290"/><circle cx="4" cy="11" r="2.2" fill="#7a8290"/><circle cx="4" cy="18.5" r="2.2" fill="#7a8290"/></svg>
<div class="row" style="top:578px"><svg style="position:absolute;left:970px;top:1px" width="16" height="22" viewBox="0 0 16 22" fill="none"><path d="M3.5 1.4 L12.5 10.9 L3.5 20.4" stroke="#d8d8dc" stroke-width="1.8"/></svg><span class="c1">May 27 8:50:07.887 AM</span><span class="c2">checkout</span><span class="c3">info</span><span class="c4">{&quot;message&quot;:&quot;[PlaceOrder] user_id=\&quot;a91c4166-3a16-11f0-8ddd-a2eca418a8a4\&quot; user_currency=\&quot;USD\&quot;&quot;,&quot;severity&quot;:&quot;info&quot;,&quot;t…</span></div><div class="row" style="top:618px"><svg style="position:absolute;left:970px;top:1px" width="16" height="22" viewBox="0 0 16 22" fill="none"><path d="M3.5 1.4 L12.5 10.9 L3.5 20.4" stroke="#d8d8dc" stroke-width="1.8"/></svg><span class="c1">May 27 8:50:07.887 AM</span><span class="c2">checkout</span><span class="c3">info</span><span class="c4">{&quot;message&quot;:&quot;[PlaceOrder] user_id=\&quot;a986973c-3a16-11f0-8ddd-a2eca418a8a4\&quot; user_currency=\&quot;USD\&quot;&quot;,&quot;severity&quot;:&quot;info&quot;,&quot;t…</span></div><div class="row" style="top:658px"><svg style="position:absolute;left:970px;top:1px" width="16" height="22" viewBox="0 0 16 22" fill="none"><path d="M3.5 1.4 L12.5 10.9 L3.5 20.4" stroke="#d8d8dc" stroke-width="1.8"/></svg><span class="c1">May 27 8:50:07.887 AM</span><span class="c2">checkout</span><span class="c3">info</span><span class="c4">{&quot;message&quot;:&quot;[PlaceOrder] user_id=\&quot;a9d7ae2e-3a16-11f0-8ddd-a2eca418a8a4\&quot; user_currency=\&quot;USD\&quot;&quot;,&quot;severity&quot;:&quot;info&quot;,&quot;t…</span></div><div class="row" style="top:698px"><svg style="position:absolute;left:970px;top:1px" width="16" height="22" viewBox="0 0 16 22" fill="none"><path d="M3.5 1.4 L12.5 10.9 L3.5 20.4" stroke="#d8d8dc" stroke-width="1.8"/></svg><span class="c1">May 27 8:50:07.887 AM</span><span class="c2">checkout</span><span class="c3">info</span><span class="c4">{&quot;message&quot;:&quot;[PlaceOrder] user_id=\&quot;a7c99f7a-3a16-11f0-8ddd-a2eca418a8a4\&quot; user_currency=\&quot;USD\&quot;&quot;,&quot;severity&quot;:&quot;info&quot;,&quot;t…</span></div><div class="row" style="top:738px"><svg style="position:absolute;left:970px;top:1px" width="16" height="22" viewBox="0 0 16 22" fill="none"><path d="M3.5 1.4 L12.5 10.9 L3.5 20.4" stroke="#d8d8dc" stroke-width="1.8"/></svg><span class="c1">May 27 8:50:07.887 AM</span><span class="c2">checkout</span><span class="c3">info</span><span class="c4">{&quot;message&quot;:&quot;[PlaceOrder] user_id=\&quot;a9374966-3a16-11f0-8ddd-a2eca418a8a4\&quot; user_currency=\&quot;USD\&quot;&quot;,&quot;severity&quot;:&quot;info&quot;,&quot;t…</span></div><div class="row" style="top:778px"><svg style="position:absolute;left:970px;top:1px" width="16" height="22" viewBox="0 0 16 22" fill="none"><path d="M3.5 1.4 L12.5 10.9 L3.5 20.4" stroke="#d8d8dc" stroke-width="1.8"/></svg><span class="c1">May 27 8:50:07.887 AM</span><span class="c2">checkout</span><span class="c3">info</span><span class="c4">{&quot;message&quot;:&quot;[PlaceOrder] user_id=\&quot;a9b48cbe-3a16-11f0-8ddd-a2eca418a8a4\&quot; user_currency=\&quot;USD\&quot;&quot;,&quot;severity&quot;:&quot;info&quot;,&quot;t…</span></div><div class="row" style="top:818px"><svg style="position:absolute;left:970px;top:1px" width="16" height="22" viewBox="0 0 16 22" fill="none"><path d="M3.5 1.4 L12.5 10.9 L3.5 20.4" stroke="#d8d8dc" stroke-width="1.8"/></svg><span class="c1">May 27 8:50:07.887 AM</span><span class="c2">checkout</span><span class="c3">info</span><span class="c4">{&quot;message&quot;:&quot;[PlaceOrder] user_id=\&quot;a7e9db46-3a16-11f0-8ddd-a2eca418a8a4\&quot; user_currency=\&quot;USD\&quot;&quot;,&quot;severity&quot;:&quot;info&quot;,&quot;t…</span></div><div class="row" style="top:858px"><svg style="position:absolute;left:970px;top:1px" width="16" height="22" viewBox="0 0 16 22" fill="none"><path d="M3.5 1.4 L12.5 10.9 L3.5 20.4" stroke="#d8d8dc" stroke-width="1.8"/></svg><span class="c1">May 27 8:50:07.887 AM</span><span class="c2">checkout</span><span class="c3">info</span><span class="c4">{&quot;message&quot;:&quot;[PlaceOrder] user_id=\&quot;a7c65ee6-3a16-11f0-8ddd-a2eca418a8a4\&quot; user_currency=\&quot;USD\&quot;&quot;,&quot;severity&quot;:&quot;info&quot;,&quot;t…</span></div><div class="row" style="top:898px"><svg style="position:absolute;left:970px;top:1px" width="16" height="22" viewBox="0 0 16 22" fill="none"><path d="M3.5 1.4 L12.5 10.9 L3.5 20.4" stroke="#d8d8dc" stroke-width="1.8"/></svg><span class="c1">May 27 8:50:07.541 AM</span><span class="c2">frontend-proxy</span><span class="c3">info</span><span class="c4">[2025-05-26T09:49:07.552Z] &quot;GET /api/cart HTTP/1.1&quot; 200 - via_upstream - &quot;-&quot; 0 24 592 591 &quot;-&quot; &quot;python-requests/2.32.3…</span></div><div class="row" style="top:938px"><svg style="position:absolute;left:970px;top:1px" width="16" height="22" viewBox="0 0 16 22" fill="none"><path d="M3.5 1.4 L12.5 10.9 L3.5 20.4" stroke="#d8d8dc" stroke-width="1.8"/></svg><span class="c1">May 27 8:50:07.493 AM</span><span class="c2">frontend-proxy</span><span class="c3">info</span><span class="c4">[2025-05-26T09:49:07.504Z] &quot;GET /api/data?contextKeys=accessories HTTP/1.1&quot; 200 - via_upstream - &quot;-&quot; 0 303 746 746 &quot;-…</span></div><div class="row" style="top:978px"><svg style="position:absolute;left:970px;top:1px" width="16" height="22" viewBox="0 0 16 22" fill="none"><path d="M3.5 1.4 L12.5 10.9 L3.5 20.4" stroke="#d8d8dc" stroke-width="1.8"/></svg><span class="c1">May 27 8:50:07.550 AM</span><span class="c2">frontend-proxy</span><span class="c3">info</span><span class="c4">[2025-05-26T09:49:07.561Z] &quot;GET /api/data?contextKeys=books HTTP/1.1&quot; 200 - via_upstream - &quot;-&quot; 0 165 693 692 &quot;-&quot; &quot;pyt…</span></div><div class="row" style="top:1018px"><svg style="position:absolute;left:970px;top:1px" width="16" height="22" viewBox="0 0 16 22" fill="none"><path d="M3.5 1.4 L12.5 10.9 L3.5 20.4" stroke="#d8d8dc" stroke-width="1.8"/></svg><span class="c1">May 27 8:50:07.550 AM</span><span class="c2">frontend-proxy</span><span class="c3">info</span><span class="c4">[2025-05-26T09:49:07.561Z] &quot;GET /api/data?contextKeys=books HTTP/1.1&quot; 200 - via_upstream - &quot;-&quot; 0 214 690 690 &quot;-&quot; &quot;pyt…</span></div><div class="row" style="top:1058px"><svg style="position:absolute;left:970px;top:1px" width="16" height="22" viewBox="0 0 16 22" fill="none"><path d="M3.5 1.4 L12.5 10.9 L3.5 20.4" stroke="#d8d8dc" stroke-width="1.8"/></svg><span class="c1">May 27 8:50:07.553 AM</span><span class="c2">frontend-proxy</span><span class="c3">info</span><span class="c4">[2025-05-26T09:49:07.563Z] &quot;GET /api/data HTTP/1.1&quot; 200 - via_upstream - &quot;-&quot; 0 208 686 685 &quot;-&quot; &quot;python-requests/2.32.…</span></div><div class="row" style="top:1098px"><svg style="position:absolute;left:970px;top:1px" width="16" height="22" viewBox="0 0 16 22" fill="none"><path d="M3.5 1.4 L12.5 10.9 L3.5 20.4" stroke="#d8d8dc" stroke-width="1.8"/></svg><span class="c1">May 27 8:50:07.467 AM</span><span class="c2">frontend-proxy</span><span class="c3">info</span><span class="c4">[2025-05-26T09:49:07.478Z] &quot;GET /api/recommendations?productIds=LS4PSXUNUM HTTP/1.1&quot; 200 - via_upstream - &quot;-&quot; 0 937 8…</span></div><div class="row" style="top:1138px"><svg style="position:absolute;left:970px;top:1px" width="16" height="22" viewBox="0 0 16 22" fill="none"><path d="M3.5 1.4 L12.5 10.9 L3.5 20.4" stroke="#d8d8dc" stroke-width="1.8"/></svg><span class="c1">May 27 8:50:07.559 AM</span><span class="c2">frontend-proxy</span><span class="c3">info</span><span class="c4">[2025-05-26T09:49:07.570Z] &quot;GET /api/data/ HTTP/1.1&quot; 308 - via_upstream - &quot;-&quot; 0 9 317 317 &quot;-&quot; &quot;python-requests/2.32.3…</span></div><div class="row" style="top:1178px"><svg style="position:absolute;left:970px;top:1px" width="16" height="22" viewBox="0 0 16 22" fill="none"><path d="M3.5 1.4 L12.5 10.9 L3.5 20.4" stroke="#d8d8dc" stroke-width="1.8"/></svg><span class="c1">May 27 8:50:07.468 AM</span><span class="c2">frontend-proxy</span><span class="c3">info</span><span class="c4">[2025-05-26T09:49:07.479Z] &quot;GET /api/recommendations?productIds=6E92ZMYYFZ HTTP/1.1&quot; 200 - via_upstream - &quot;-&quot; 0 1391 …</span></div><div class="row" style="top:1218px"><svg style="position:absolute;left:970px;top:1px" width="16" height="22" viewBox="0 0 16 22" fill="none"><path d="M3.5 1.4 L12.5 10.9 L3.5 20.4" stroke="#d8d8dc" stroke-width="1.8"/></svg><span class="c1">May 27 8:50:07.559 AM</span><span class="c2">frontend-proxy</span><span class="c3">info</span><span class="c4">[2025-05-26T09:49:07.570Z] &quot;GET /api/data?contextKeys=binoculars HTTP/1.1&quot; 200 - via_upstream - &quot;-&quot; 0 83 681 681 &quot;-&quot; …</span></div><div class="row" style="top:1258px"><svg style="position:absolute;left:970px;top:1px" width="16" height="22" viewBox="0 0 16 22" fill="none"><path d="M3.5 1.4 L12.5 10.9 L3.5 20.4" stroke="#d8d8dc" stroke-width="1.8"/></svg><span class="c1">May 27 8:50:07.468 AM</span><span class="c2">frontend-proxy</span><span class="c3">info</span><span class="c4">[2025-05-26T09:49:07.479Z] &quot;GET /api/products/1YMWWN1N4O HTTP/1.1&quot; 200 - via_upstream - &quot;-&quot; 0 888 133 133 &quot;-&quot; &quot;python…</span></div><div class="row" style="top:1298px"><svg style="position:absolute;left:970px;top:1px" width="16" height="22" viewBox="0 0 16 22" fill="none"><path d="M3.5 1.4 L12.5 10.9 L3.5 20.4" stroke="#d8d8dc" stroke-width="1.8"/></svg><span class="c1">May 27 8:50:07.469 AM</span><span class="c2">frontend-proxy</span><span class="c3">info</span><span class="c4">[2025-05-26T09:49:07.480Z] &quot;GET /api/products/L9ECAV7KIM HTTP/1.1&quot; 200 - via_upstream - &quot;-&quot; 0 735 134 134 &quot;-&quot; &quot;python…</span></div><div class="row" style="top:1338px"><svg style="position:absolute;left:970px;top:1px" width="16" height="22" viewBox="0 0 16 22" fill="none"><path d="M3.5 1.4 L12.5 10.9 L3.5 20.4" stroke="#d8d8dc" stroke-width="1.8"/></svg><span class="c1">May 27 8:50:07.470 AM</span><span class="c2">frontend-proxy</span><span class="c3">info</span><span class="c4">[2025-05-26T09:49:07.481Z] &quot;GET /api/data/?contextKeys=accessories HTTP/1.1&quot; 308 - via_upstream - &quot;-&quot; 0 33 27 27 &quot;-&quot; …</span></div><div class="row" style="top:1378px"><svg style="position:absolute;left:970px;top:1px" width="16" height="22" viewBox="0 0 16 22" fill="none"><path d="M3.5 1.4 L12.5 10.9 L3.5 20.4" stroke="#d8d8dc" stroke-width="1.8"/></svg><span class="c1">May 27 8:50:07.470 AM</span><span class="c2">frontend-proxy</span><span class="c3">info</span><span class="c4">[2025-05-26T09:49:07.481Z] &quot;GET /api/products/9SIQT8TOJO HTTP/1.1&quot; 200 - via_upstream - &quot;-&quot; 0 782 134 133 &quot;-&quot; &quot;python…</span></div><div class="row" style="top:1418px"><svg style="position:absolute;left:970px;top:1px" width="16" height="22" viewBox="0 0 16 22" fill="none"><path d="M3.5 1.4 L12.5 10.9 L3.5 20.4" stroke="#d8d8dc" stroke-width="1.8"/></svg><span class="c1">May 27 8:50:07.470 AM</span><span class="c2">frontend-proxy</span><span class="c3">info</span><span class="c4">[2025-05-26T09:49:07.481Z] &quot;GET /api/products/2ZYFJ3GM2N HTTP/1.1&quot; 200 - via_upstream - &quot;-&quot; 0 558 134 134 &quot;-&quot; &quot;python…</span></div><div class="row" style="top:1458px"><svg style="position:absolute;left:970px;top:1px" width="16" height="22" viewBox="0 0 16 22" fill="none"><path d="M3.5 1.4 L12.5 10.9 L3.5 20.4" stroke="#d8d8dc" stroke-width="1.8"/></svg><span class="c1">May 27 8:50:07.470 AM</span><span class="c2">frontend-proxy</span><span class="c3">info</span><span class="c4">[2025-05-26T09:49:07.481Z] &quot;GET /api/recommendations?productIds=2ZYFJ3GM2N HTTP/1.1&quot; 200 - via_upstream - &quot;-&quot; 0 1067 …</span></div><div class="row" style="top:1498px"><svg style="position:absolute;left:970px;top:1px" width="16" height="22" viewBox="0 0 16 22" fill="none"><path d="M3.5 1.4 L12.5 10.9 L3.5 20.4" stroke="#d8d8dc" stroke-width="1.8"/></svg><span class="c1">May 27 8:50:07.471 AM</span><span class="c2">frontend-proxy</span><span class="c3">info</span><span class="c4">[2025-05-26T09:49:07.482Z] &quot;GET /api/recommendations?productIds=HQTGWGPNH4 HTTP/1.1&quot; 200 - via_upstream - &quot;-&quot; 0 1093 …</span></div><div class="row" style="top:1538px"><svg style="position:absolute;left:970px;top:1px" width="16" height="22" viewBox="0 0 16 22" fill="none"><path d="M3.5 1.4 L12.5 10.9 L3.5 20.4" stroke="#d8d8dc" stroke-width="1.8"/></svg><span class="c1">May 27 8:50:07.471 AM</span><span class="c2">frontend-proxy</span><span class="c3">info</span><span class="c4">[2025-05-26T09:49:07.482Z] &quot;GET /api/products/L9ECAV7KIM HTTP/1.1&quot; 200 - via_upstream - &quot;-&quot; 0 735 134 134 &quot;-&quot; &quot;python…</span></div><div class="row" style="top:1578px"><svg style="position:absolute;left:970px;top:1px" width="16" height="22" viewBox="0 0 16 22" fill="none"><path d="M3.5 1.4 L12.5 10.9 L3.5 20.4" stroke="#d8d8dc" stroke-width="1.8"/></svg><span class="c1">May 27 8:50:07.472 AM</span><span class="c2">frontend-proxy</span><span class="c3">info</span><span class="c4">[2025-05-26T09:49:07.483Z] &quot;GET /api/products/66VCHSJNUP HTTP/1.1&quot; 200 - via_upstream - &quot;-&quot; 0 498 175 175 &quot;-&quot; &quot;python…</span></div><div class="row" style="top:1618px"><svg style="position:absolute;left:970px;top:1px" width="16" height="22" viewBox="0 0 16 22" fill="none"><path d="M3.5 1.4 L12.5 10.9 L3.5 20.4" stroke="#d8d8dc" stroke-width="1.8"/></svg><span class="c1">May 27 8:50:07.472 AM</span><span class="c2">frontend-proxy</span><span class="c3">info</span><span class="c4">[2025-05-26T09:49:07.483Z] &quot;GET /api/data/?contextKeys=travel HTTP/1.1&quot; 308 - via_upstream - &quot;-&quot; 0 28 43 43 &quot;-&quot; &quot;pyth…</span></div><div class="row" style="top:1658px"><svg style="position:absolute;left:970px;top:1px" width="16" height="22" viewBox="0 0 16 22" fill="none"><path d="M3.5 1.4 L12.5 10.9 L3.5 20.4" stroke="#d8d8dc" stroke-width="1.8"/></svg><span class="c1">May 27 8:50:07.472 AM</span><span class="c2">frontend-proxy</span><span class="c3">info</span><span class="c4">[2025-05-26T09:49:07.483Z] &quot;GET /api/products/HQTGWGPNH4 HTTP/1.1&quot; 200 - via_upstream - &quot;-&quot; 0 741 136 136 &quot;-&quot; &quot;python…</span></div><div class="row" style="top:1698px"><svg style="position:absolute;left:970px;top:1px" width="16" height="22" viewBox="0 0 16 22" fill="none"><path d="M3.5 1.4 L12.5 10.9 L3.5 20.4" stroke="#d8d8dc" stroke-width="1.8"/></svg><span class="c1">May 27 8:50:07.473 AM</span><span class="c2">frontend-proxy</span><span class="c3">info</span><span class="c4">[2025-05-26T09:49:07.483Z] &quot;GET /api/data/?contextKeys=binoculars HTTP/1.1&quot; 308 - via_upstream - &quot;-&quot; 0 32 46 45 &quot;-&quot; &quot;…</span></div><div class="row" style="top:1738px"><svg style="position:absolute;left:970px;top:1px" width="16" height="22" viewBox="0 0 16 22" fill="none"><path d="M3.5 1.4 L12.5 10.9 L3.5 20.4" stroke="#d8d8dc" stroke-width="1.8"/></svg><span class="c1">May 27 8:50:07.473 AM</span><span class="c2">frontend-proxy</span><span class="c3">info</span><span class="c4">[2025-05-26T09:49:07.484Z] &quot;GET /api/products/0PUK6V6EV0 HTTP/1.1&quot; 200 - via_upstream - &quot;-&quot; 0 421 136 136 &quot;-&quot; &quot;python…</span></div><div class="row" style="top:1778px"><svg style="position:absolute;left:970px;top:1px" width="16" height="22" viewBox="0 0 16 22" fill="none"><path d="M3.5 1.4 L12.5 10.9 L3.5 20.4" stroke="#d8d8dc" stroke-width="1.8"/></svg><span class="c1">May 27 8:50:07.473 AM</span><span class="c2">frontend-proxy</span><span class="c3">info</span><span class="c4">[2025-05-26T09:49:07.484Z] &quot;GET /api/products/1YMWWN1N4O HTTP/1.1&quot; 200 - via_upstream - &quot;-&quot; 0 888 136 136 &quot;-&quot; &quot;python…</span></div><div class="row" style="top:1818px"><svg style="position:absolute;left:970px;top:1px" width="16" height="22" viewBox="0 0 16 22" fill="none"><path d="M3.5 1.4 L12.5 10.9 L3.5 20.4" stroke="#d8d8dc" stroke-width="1.8"/></svg><span class="c1">May 27 8:50:07.474 AM</span><span class="c2">frontend-proxy</span><span class="c3">info</span><span class="c4">[2025-05-26T09:49:07.485Z] &quot;GET /api/products/2ZYFJ3GM2N HTTP/1.1&quot; 200 - via_upstream - &quot;-&quot; 0 558 137 136 &quot;-&quot; &quot;python…</span></div>
<div class="r" style="left:2131px;top:491px;width:302px;height:44px;background:#1b1c20;border:2px solid #1fdca6;border-radius:5px;"></div>
<svg class="r" style="left:2148px;top:500px;" width="22" height="26" viewBox="0 0 22 26" fill="none"><path d="M14.5 0.5 L2.5 14 L9.5 14 L5.5 25.5 L19.5 10.5 L12.5 10.5 Z" fill="#6ff2cb"/></svg>
<div class="t" style="left:2187.00px;top:502.20px;font-family:'Liberation Mono', monospace;font-size:24px;line-height:27px;color:#20dea6;font-weight:700;">Resume Live Tail</div>
<div class="r" style="left:2665px;top:198px;width:925px;height:674px;background:#25262b;border:2px solid #3a3b40;border-radius:6px;"></div>
<div class="r" style="left:2686px;top:213px;width:133px;height:44px;background:#303138;border-radius:5px;"></div>
<div class="t" style="left:2703.00px;top:224.50px;font-family:'Liberation Mono', monospace;font-size:24px;line-height:27px;color:#b4b4bc;font-weight:700;">1h back</div>
<div class="r" style="left:2827px;top:213px;width:176px;height:44px;background:#303138;border-radius:5px;"></div>
<div class="t" style="left:2843.90px;top:224.50px;font-family:'Liberation Mono', monospace;font-size:24px;line-height:27px;color:#b4b4bc;font-weight:700;">1h forward</div>
<svg class="r" style="left:3524px;top:219px;" width="31" height="31" viewBox="0 0 31 31" fill="none"><path d="M3 3 L28 28 M28 3 L3 28" stroke="#c4c4cc" stroke-width="2.6"/></svg>
<div class="r" style="left:2667px;top:271px;width:359px;height:599px;background:#1b1c20;border-radius:5px;"></div>
<div class="r" style="left:3028px;top:271px;width:560px;height:599px;background:#1b1c20;border-radius:5px;"></div>
<div class="t" style="left:2703.00px;top:302.40px;font-family:'Liberation Mono', monospace;font-size:24px;line-height:27px;color:#c0c0c8;">Live Tail</div>
<div class="r" style="left:2686px;top:343px;width:320px;height:2px;background:#45454f;"></div>
<div class="r" style="left:2686px;top:581px;width:320px;height:2px;background:#45454f;"></div>
<div class="r" style="left:2686px;top:775px;width:320px;height:2px;background:#45454f;"></div>
<div class="t" style="left:2703.00px;top:364.60px;font-family:'Liberation Mono', monospace;font-size:24px;line-height:27px;color:#c0c0c8;">Last 1 minute</div>
<div class="t" style="left:2703.00px;top:408.20px;font-family:'Liberation Mono', monospace;font-size:24px;line-height:27px;color:#c0c0c8;">Last 5 minutes</div>
<div class="t" style="left:2703.00px;top:452.20px;font-family:'Liberation Mono', monospace;font-size:24px;line-height:27px;color:#c0c0c8;">Last 15 minutes</div>
<div class="t" style="left:2703.00px;top:496.00px;font-family:'Liberation Mono', monospace;font-size:24px;line-height:27px;color:#c0c0c8;">Last 30 minutes</div>
<div class="t" style="left:2703.00px;top:539.80px;font-family:'Liberation Mono', monospace;font-size:24px;line-height:27px;color:#c0c0c8;">Last 45 minutes</div>
<div class="t" style="left:2703.00px;top:603.00px;font-family:'Liberation Mono', monospace;font-size:24px;line-height:27px;color:#c0c0c8;">Last 1 hour</div>
<div class="t" style="left:2703.00px;top:646.80px;font-family:'Liberation Mono', monospace;font-size:24px;line-height:27px;color:#c0c0c8;">Last 3 hours</div>
<div class="t" style="left:2703.00px;top:690.60px;font-family:'Liberation Mono', monospace;font-size:24px;line-height:27px;color:#c0c0c8;">Last 6 hours</div>
<div class="t" style="left:2703.00px;top:734.40px;font-family:'Liberation Mono', monospace;font-size:24px;line-height:27px;color:#c0c0c8;">Last 12 hours</div>
<div class="t" style="left:2703.00px;top:797.00px;font-family:'Liberation Mono', monospace;font-size:24px;line-height:27px;color:#c0c0c8;">Last 1 days</div>
<div class="t" style="left:2703.00px;top:840.80px;font-family:'Liberation Mono', monospace;font-size:24px;line-height:27px;color:#c0c0c8;">Last 2 days</div>
<div class="r" style="left:2678px;top:774px;width:224px;height:60px;background:transparent;border:10px solid #00b5a0;"></div>
<div class="r" style="left:3048px;top:292px;width:520px;height:62px;background:#141518;border-radius:6px;"></div>
<div class="r" style="left:3056px;top:300px;width:252px;height:47px;background:#2c2d33;border-radius:5px;"></div>
<div class="t" style="left:3109.80px;top:312.00px;font-family:'Liberation Mono', monospace;font-size:24px;line-height:27px;color:#f4f4f4;font-weight:700;">Time range</div>
<div class="t" style="left:3341.00px;top:312.00px;font-family:'Liberation Mono', monospace;font-size:24px;line-height:27px;color:#a8a8b0;font-weight:700;">Around a time</div>
<div class="t" style="left:3048.00px;top:393.00px;font-family:'Liberation Mono', monospace;font-size:22px;line-height:25px;color:#8e8e96;">Start time</div>
<div class="r" style="left:3048px;top:432px;width:520px;height:58px;background:#2b2c32;border:2px solid #76767f;border-radius:4px;"></div>
<div class="t" style="left:3070.00px;top:449.50px;font-family:'Liberation Mono', monospace;font-size:24px;line-height:27px;color:#c8c8cc;">2025-05-26 08:50:07</div>
<div class="t" style="left:3048.00px;top:529.00px;font-family:'Liberation Mono', monospace;font-size:22px;line-height:25px;color:#8e8e96;">End time</div>
<div class="r" style="left:3048px;top:567px;width:520px;height:59px;background:#2b2c32;border:2px solid #76767f;border-radius:4px;"></div>
<div class="t" style="left:3070.00px;top:585.00px;font-family:'Liberation Mono', monospace;font-size:24px;line-height:27px;color:#c8c8cc;">2025-05-27 08:50:07</div>
<div class="t" style="left:3048.00px;top:653.00px;font-family:'Liberation Mono', monospace;font-size:22px;line-height:25px;color:#5c5c66;">You can use natural language to select</div>
<div class="t" style="left:3048.00px;top:679.50px;font-family:'Liberation Mono', monospace;font-size:22px;line-height:25px;color:#5c5c66;">dates (e.g. yesterday, last monday at</div>
<div class="t" style="left:3048.00px;top:705.50px;font-family:'Liberation Mono', monospace;font-size:22px;line-height:25px;color:#5c5c66;">5pm)</div>
<div class="r" style="left:3048px;top:781px;width:520px;height:2px;background:#2e2f34;"></div>
<div class="r" style="left:3454px;top:799px;width:114px;height:52px;background:#1a3a35;border-radius:5px;"></div>
<div class="t" style="left:3472.60px;top:813.40px;font-family:'Liberation Mono', monospace;font-size:26px;line-height:30px;color:#5ff5c5;font-weight:700;">Apply</div><div id="frame"></div></div></body></html>
